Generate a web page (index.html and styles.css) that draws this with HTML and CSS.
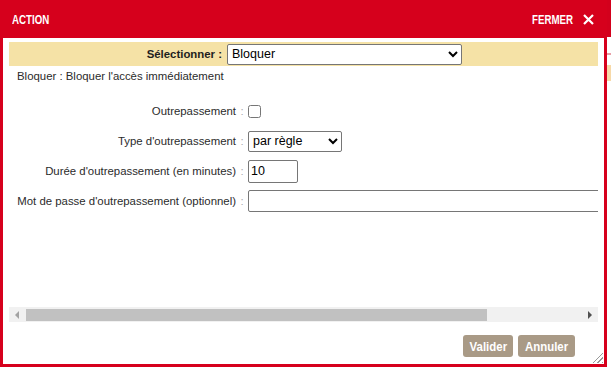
FILE: index.html
```html
<!DOCTYPE html>
<html lang="fr">
<head>
    <meta charset="UTF-8">
    <meta name="viewport" content="width=device-width, initial-scale=1.0">
    <title>Action</title>
    <link rel="stylesheet" href="styles.css">
</head>
<body>
    <div class="page">
        <div class="page-header"></div>
        <div class="page-line"></div>
        <div class="page-tab"></div>
    </div>

    <div class="dialog">
        <div class="dialog-header">
            <span class="dialog-title"><span class="narrow narrow-left">ACTION</span></span>
            <span class="dialog-close">
                <span class="narrow narrow-right">FERMER</span>
                <svg class="close-x" width="11" height="11" viewBox="0 0 11 11">
                    <path d="M1 1 L10 10 M10 1 L1 10" stroke="#fff" stroke-width="2.2" fill="none"/>
                </svg>
            </span>
        </div>
        <div class="dialog-body">
            <div class="select-bar">
                <label for="actionSelect">Sélectionner :</label>
                <select id="actionSelect" class="action-select">
                    <option selected>Bloquer</option>
                    <option>Autoriser</option>
                    <option>Avertir</option>
                </select>
            </div>
            <div class="scroll-area">
                <div class="scroll-content">
                    <p class="description">Bloquer : Bloquer l'accès immédiatement</p>
                    <div class="form-grid">
                        <label for="override">Outrepassement</label>
                        <span class="sep">:</span>
                        <div><input type="checkbox" id="override"></div>

                        <label for="overrideType">Type d'outrepassement</label>
                        <span class="sep">:</span>
                        <div>
                            <select id="overrideType" class="small-select">
                                <option selected>par règle</option>
                                <option>global</option>
                            </select>
                        </div>

                        <label for="duration">Durée d'outrepassement (en minutes)</label>
                        <span class="sep">:</span>
                        <div><input type="text" id="duration" class="short-input" value="10"></div>

                        <label for="password">Mot de passe d'outrepassement (optionnel)</label>
                        <span class="sep">:</span>
                        <div><input type="password" id="password" class="long-input"></div>
                    </div>
                </div>
            </div>
            <!-- horizontal scrollbar of the form area -->
            <div class="hscroll">
                <span class="hscroll-btn"><span class="tri tri-left"></span></span>
                <div class="hscroll-track"><div class="hscroll-thumb"></div></div>
                <span class="hscroll-btn"><span class="tri tri-right"></span></span>
            </div>
        </div>
        <div class="dialog-footer">
            <button class="btn btn-ok"><span class="narrow">Valider</span></button>
            <button class="btn btn-cancel"><span class="narrow">Annuler</span></button>
            <span class="grip"></span>
        </div>
    </div>
</body>
</html>
```

FILE: styles.css
```css
body {
    margin: 0;
    font-family: "Liberation Sans", Arial, sans-serif;
    font-size: 11.4px;
    color: #2b2b2b;
    background-color: #fff;
}
.page-header {
    height: 37px;
    background-color: #d3001c;
}
.page-line {
    height: 2px;
    margin-top: 16px;
    background-color: #e8a0a8;
}
.page-tab {
    height: 16px;
    margin-top: 10px;
    background-color: #f7d9a8;
}
.dialog {
    position: absolute;
    left: 0;
    top: 0;
    width: 607px;
    height: 367px;
    box-sizing: border-box;
    border: 3px solid #d6001c;
    border-top: none;
    background-color: #fff;
    display: flex;
    flex-direction: column;
}
.dialog-header {
    height: 38px;
    flex: none;
    background-color: #d6001c;
    color: #fff;
    font-weight: bold;
    font-size: 13.5px;
    display: flex;
    align-items: center;
    justify-content: space-between;
    padding: 0 10px 0 9px;
}
.narrow {
    display: inline-block;
    transform: scaleX(0.72);
}
.narrow-left {
    transform-origin: left center;
}
.narrow-right {
    transform-origin: right center;
}
.dialog-close {
    display: flex;
    align-items: center;
}
.close-x {
    margin-left: 10px;
}
.dialog-body {
    flex: 1;
    padding: 4px 6px 0 6px;
    display: flex;
    flex-direction: column;
    min-height: 0;
}
.select-bar {
    background-color: #f5e2a6;
    height: 24px;
    flex: none;
    display: flex;
    align-items: center;
}
.select-bar label {
    width: 213px;
    text-align: right;
    font-weight: bold;
    color: #1e1e1e;
}
.action-select {
    width: 235px;
    height: 21px;
    margin-left: 5px;
    font-family: "Liberation Sans", Arial, sans-serif;
    font-size: 12.5px;
    color: #000;
    border: 1px solid #767676;
    border-radius: 2px;
    background-color: #fff;
}
.scroll-area {
    flex: 1;
    overflow: hidden;
}
.scroll-content {
    width: 712px;
}
.description {
    margin: 0;
    padding: 3px 0 0 8px;
    line-height: 14px;
}
.form-grid {
    display: grid;
    grid-template-columns: 227px 12px 1fr;
    grid-auto-rows: 30px;
    align-items: center;
    margin-top: 13px;
}
.form-grid label {
    text-align: right;
    white-space: nowrap;
}
.sep {
    color: #aaa;
    text-align: center;
}
.form-grid input[type="checkbox"] {
    width: 13px;
    height: 13px;
    margin: 0;
    vertical-align: middle;
}
.small-select {
    width: 94px;
    height: 21px;
    font-family: "Liberation Sans", Arial, sans-serif;
    font-size: 12.5px;
    color: #000;
    border: 1px solid #767676;
    border-radius: 2px;
    background-color: #fff;
}
.short-input, .long-input {
    height: 23px;
    box-sizing: border-box;
    border: 1px solid #767676;
    border-radius: 2px;
    padding: 1px 2px;
    font-family: "Liberation Sans", Arial, sans-serif;
    font-size: 12.5px;
    color: #000;
}
.short-input {
    width: 50px;
}
.long-input {
    width: 460px;
    height: 22px;
}
.hscroll {
    height: 15px;
    flex: none;
    display: flex;
    background-color: #f1f1f1;
}
.hscroll-btn {
    width: 16px;
    display: flex;
    align-items: center;
    justify-content: center;
}
.tri {
    width: 0;
    height: 0;
    border-top: 4px solid transparent;
    border-bottom: 4px solid transparent;
}
.tri-left {
    border-right: 4px solid #a3a3a3;
}
.tri-right {
    border-left: 4px solid #505050;
}
.hscroll-track {
    flex: 1;
    padding: 2px 1px;
}
.hscroll-thumb {
    width: 461px;
    height: 12px;
    background-color: #c1c1c1;
}
.dialog-footer {
    height: 42px;
    flex: none;
    display: flex;
    align-items: flex-start;
    justify-content: flex-end;
    gap: 5px;
    padding: 13px 29px 0 0;
    box-sizing: border-box;
    position: relative;
}
.btn {
    height: 22px;
    padding: 0;
    border: none;
    border-radius: 3px;
    background-color: #a99a86;
    color: #fff;
    font-family: "Liberation Sans", Arial, sans-serif;
    font-weight: bold;
    font-size: 13px;
    white-space: nowrap;
    display: flex;
    align-items: center;
    justify-content: center;
}
.btn .narrow {
    transform: scaleX(0.88);
}
.btn-ok {
    width: 50px;
}
.btn-cancel {
    width: 57px;
}
.grip {
    position: absolute;
    right: 1px;
    bottom: 1px;
    width: 13px;
    height: 13px;
    background: repeating-linear-gradient(135deg, transparent 0 2px, #999 2px 3px);
    clip-path: polygon(100% 0, 100% 100%, 0 100%);
}
```
